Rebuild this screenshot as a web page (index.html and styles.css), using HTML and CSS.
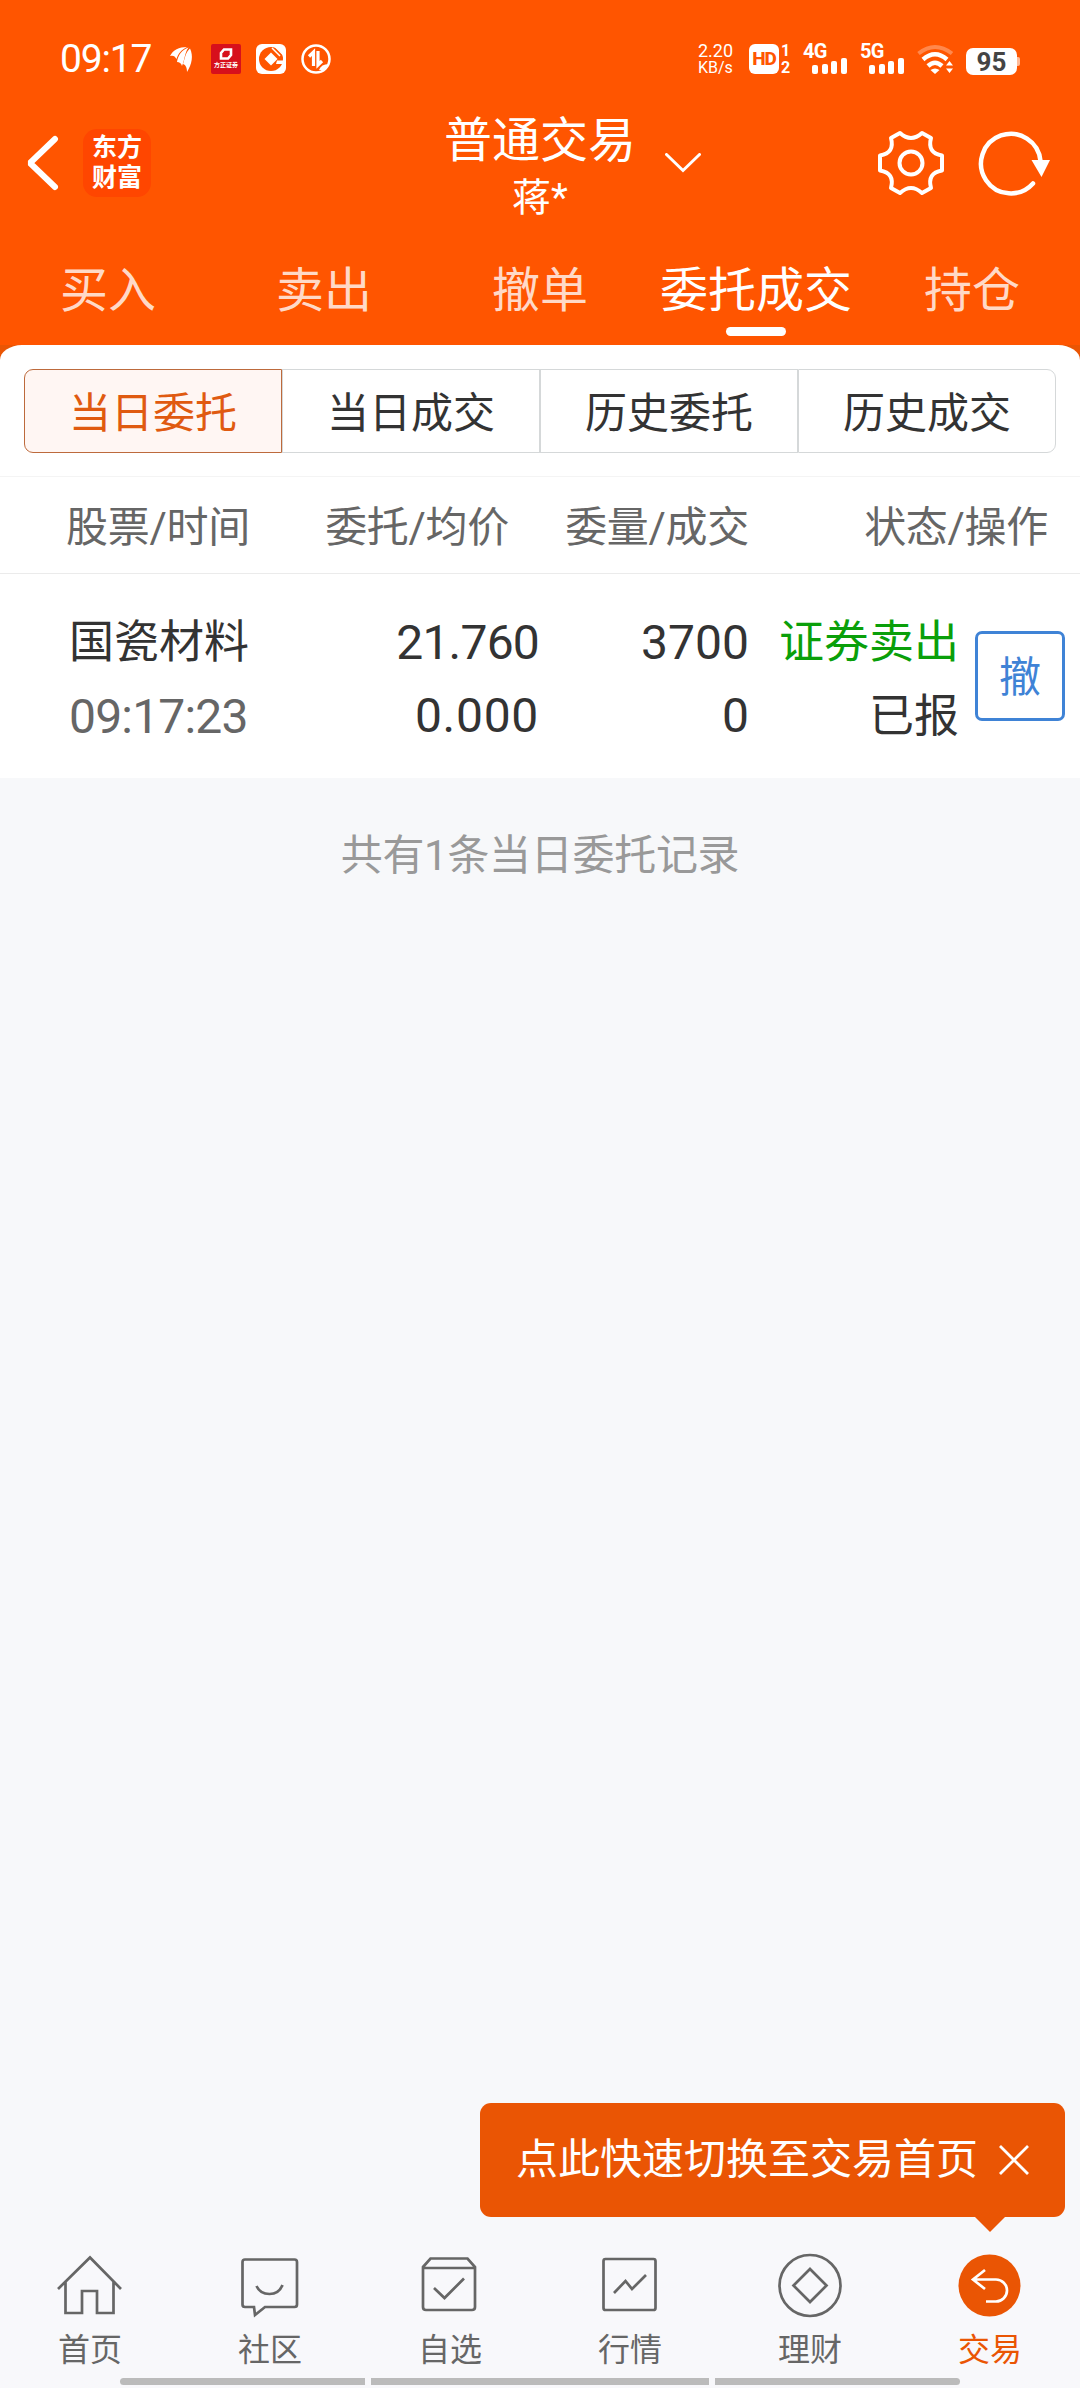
FILE: index.html
```html
<!DOCTYPE html>
<html lang="zh-CN">

<head>
    <meta charset="UTF-8">
    <meta name="viewport" content="width=device-width, initial-scale=1.0">
    <title>普通交易 - 委托成交</title>
    <link rel="stylesheet" href="styles.css">
</head>

<body>
    <div class="page">
        <div class="statusbar">
            <span class="clock">09:17</span>
            <div class="notices">
                <svg width="30" height="30" viewBox="0 0 30 30" fill="#fff">
                    <path d="M4 12C7 6 13 3 21 3C15 6 12 10 10.500 15C9 12 7 11 4 12Z" />
                    <path d="M11 18C12 11 16 6 22.500 3.500C18.500 9 19 15 16 22C15 19 13.500 18 11 18Z" />
                    <path d="M17 20C19 15 19 9 24 4.500C27.500 12 26 20 21 28C21 24 20 21 17 20Z" />
                </svg>
                <div class="broker">
                    <svg width="14" height="12" viewBox="0 0 14 12">
                        <path d="M5 1.5H12V7L9 10.5H2V5Z" fill="none" stroke="#fff" stroke-width="2.6" />
                    </svg>
                    <span>方正证券</span>
                </div>
                <svg width="30" height="30" viewBox="0 0 30 30">
                    <rect width="30" height="30" rx="6" fill="#fff" />
                    <circle cx="15" cy="15" r="12" fill="#ff5500" />
                    <path d="M15 8.500L21.500 15L15 21.500L8.500 15Z" fill="#fff" />
                    <path d="M21 16.500H30V20H20Z" fill="#fff" />
                    <path d="M16 4L24 12M19.500 3L27 10.500" stroke="#fff" stroke-width="1.500" />
                </svg>
                <svg width="30" height="30" viewBox="0 0 30 30" fill="none" stroke="#fff">
                    <circle cx="15" cy="15" r="13.5" stroke-width="2.5" />
                    <path d="M12.5 22V8L8 12.5M17 7V21L21 17" stroke-width="3.2" />
                    <path d="M18 26Q20 20 28 20L24 26Z" fill="#fff" stroke="none" />
                </svg>
            </div>
            <div class="signals">
                <div class="speed"><span>2.20</span><span>KB/s</span></div>
                <div class="hd">HD</div>
                <div class="sim">1<br>2</div>
                <div class="cell">
                    <b>4G</b>
                    <svg width="45" height="30" viewBox="0 0 45 30" fill="#fff">
                        <rect x="9" y="21" width="6" height="9" rx="2" />
                        <rect x="19" y="20" width="6" height="10" rx="2" />
                        <rect x="28" y="17" width="6" height="13" rx="2" />
                        <rect x="38" y="14" width="6" height="16" rx="2" />
                    </svg>
                </div>
                <div class="cell cell-5g">
                    <b>5G</b>
                    <svg width="45" height="30" viewBox="0 0 45 30" fill="#fff">
                        <rect x="9" y="21" width="6" height="9" rx="2" />
                        <rect x="19" y="20" width="6" height="10" rx="2" />
                        <rect x="28" y="17" width="6" height="13" rx="2" />
                        <rect x="38" y="14" width="6" height="16" rx="2" />
                    </svg>
                </div>
                <svg class="wifi" width="38" height="30" viewBox="0 0 38 30" fill="none" stroke="#fff" stroke-width="4">
                    <path d="M1.5 9.500Q18 -3.500 35 9.500" stroke-opacity=".3" />
                    <path d="M6 15.500Q18 5 30 15.500" stroke-width="4.500" />
                    <path d="M11 22Q18 15.500 25 22" stroke-width="4.500" />
                    <path d="M13.500 26Q18 23 22.500 26L18 30Z" fill="#fff" stroke="none" />
                    <path d="M29 21.500L32.500 17L36 21.500ZM29 24.500L32.500 29L36 24.500Z" fill="#fff" stroke="none" />
                </svg>
                <div class="battery">95</div>
            </div>
        </div>

        <header>
            <div class="header-left">
                <svg class="back" width="36" height="56" viewBox="0 0 36 56">
                    <path d="M31 4L6 28L31 52" fill="none" stroke="#fff" stroke-width="6" stroke-linecap="round" stroke-linejoin="bevel" />
                </svg>
                <div class="logo">东方<br>财富</div>
            </div>
            <div class="title">
                <h1>普通交易</h1>
                <p>蒋*</p>
            </div>
            <div class="header-right">
                <svg class="arrow" width="36" height="20" viewBox="0 0 36 20">
                    <path d="M1.500 1.500L18 17.500L34.500 1.500" fill="none" stroke="#fff" stroke-width="3" stroke-linecap="round" />
                </svg>
                <svg class="gear" width="68" height="68" viewBox="-34 -34 68 68" fill="none" stroke="#fff" stroke-width="4" stroke-linejoin="round">
                    <path d="M-11 -30Q0 -20 11 -30L20 -25Q16 -10 31 -7.500V7.500Q16 10 20 25L11 30Q0 20 -11 30L-20 25Q-16 10 -31 7.500V-7.500Q-16 -10 -20 -25Z" />
                    <circle r="11.500" />
                </svg>
                <svg class="refresh" width="74" height="68" viewBox="-34 -34 74 68">
                    <path d="M29.500 -2A29.800 29.800 0 1 0 22 20.500" fill="none" stroke="#fff" stroke-width="4.500" stroke-linecap="round" />
                    <path d="M20.500 -3H39L30.500 14Z" fill="#fff" />
                </svg>
            </div>
        </header>

        <nav class="tabs">
            <a>买入</a>
            <a>卖出</a>
            <a>撤单</a>
            <a class="active">委托成交</a>
            <a>持仓</a>
        </nav>

        <div class="corner"></div>
        <main>
            <div class="segment">
                <a class="active">当日委托</a>
                <a>当日成交</a>
                <a>历史委托</a>
                <a>历史成交</a>
            </div>
            <div class="list-head">
                <span>股票/时间</span>
                <span>委托/均价</span>
                <span>委量/成交</span>
                <span>状态/操作</span>
            </div>
            <div class="order">
                <div>国瓷材料<br><span class="time">09:17:23</span></div>
                <div class="num"><span class="price">21.760</span><br><span class="avg">0.000</span></div>
                <div class="num">3700<br>0</div>
                <div class="state"><span class="sell">证券卖出</span><br>已报</div>
                <a class="cancel">撤</a>
            </div>
        </main>
        <p class="total">共有1条当日委托记录</p>

        <div class="tip">
            <span>点此快速切换至交易首页</span>
            <svg width="32" height="32" viewBox="0 0 32 32">
                <path d="M2 2L30 30M30 2L2 30" stroke="#fff" stroke-width="2.800" />
            </svg>
        </div>

        <footer>
            <div class="menu">
                <a>
                    <svg viewBox="0 0 72 72">
                        <path d="M4 39L36 7.500L67 39M11.500 32V63H28V41H43V63H59.500V32" />
                    </svg>
                    首页
                </a>
                <a>
                    <svg viewBox="0 0 72 72">
                        <path d="M11 9.500H60.500Q63 9.500 63 12V54.500Q63 57 60.500 57H31L21 65L20 57H11Q8.500 57 8.500 54.500V12Q8.500 9.500 11 9.500Z" />
                        <path d="M22.500 36Q26 44 35.500 44T48.500 35" />
                    </svg>
                    社区
                </a>
                <a>
                    <svg viewBox="0 0 72 72">
                        <path d="M9 17L16.500 8.500H53.500L61 17V57Q61 60 58 60H12Q9 60 9 57ZM9 18H61M20 38L30.500 48L50 28.500" />
                    </svg>
                    自选
                </a>
                <a>
                    <svg viewBox="0 0 72 72">
                        <rect x="9.500" y="9" width="52" height="51" rx="2" />
                        <path d="M20 43L31.500 31L38 39L52 25" />
                    </svg>
                    行情
                </a>
                <a>
                    <svg viewBox="0 0 72 72">
                        <circle cx="36" cy="35.500" r="30.500" />
                        <path d="M36 19L52.500 35.500L36 52L19.500 35.500Z" />
                    </svg>
                    理财
                </a>
                <a class="active">
                    <svg viewBox="0 0 72 72">
                        <circle cx="35.500" cy="35.500" r="31" fill="#ea5504" stroke="none" />
                        <path d="M31 20L19 29.500L31 39M19 29.500H42A11 11 0 0 1 42 51.500H32" stroke="#fff" />
                    </svg>
                    交易
                </a>
            </div>
            <div class="bars"><i></i><i></i><i></i></div>
        </footer>
    </div>
</body>

</html>
```
FILE: styles.css
```css
* {
    box-sizing: border-box;
}

body {
    margin: 0;
    font-family: Roboto, "Noto Sans CJK SC", sans-serif;
    color: #333;
}

h1, p {
    margin: 0;
    font-weight: 400;
}

svg {
    display: block;
    flex-shrink: 0;
}

.page {
    position: relative;
    display: flex;
    flex-direction: column;
    width: 1080px;
    height: 2388px;
    background-color: #f7f8fa;
    overflow: hidden;
}

/* status bar */
.statusbar {
    display: flex;
    align-items: center;
    height: 112px;
    padding: 6px 60px 0;
    background-color: #ff5500;
    color: #fff;
}

.clock {
    width: 106px;
    font-size: 39px;
    letter-spacing: -1.2px;
}

.notices {
    display: flex;
    gap: 15px;
}

.broker {
    display: flex;
    flex-direction: column;
    align-items: center;
    width: 30px;
    height: 30px;
    padding-top: 4px;
    border-radius: 2px;
    background-color: #d7101c;
}

.broker span {
    font-size: 6px;
    line-height: 10px;
    font-weight: 700;
    white-space: nowrap;
}

.signals {
    display: flex;
    align-items: center;
    height: 30px;
    margin-left: auto;
}

.speed {
    display: flex;
    flex-direction: column;
    width: 51px;
    font-size: 18px;
    line-height: 17px;
}

.speed span:last-child {
    font-size: 16px;
}

.hd {
    width: 30px;
    height: 30px;
    border-radius: 6px;
    background-color: #fff;
    color: #ff5500;
    font-size: 19px;
    font-weight: 800;
    line-height: 30px;
    text-align: center;
    letter-spacing: -1px;
}

.sim {
    width: 24px;
    padding-left: 2px;
    font-size: 16px;
    font-weight: 700;
    line-height: 17px;
}

.cell {
    position: relative;
    width: 45px;
    height: 30px;
}

.cell-5g {
    margin-left: 12px;
}

.cell b {
    position: absolute;
    left: 0;
    top: -2px;
    font-size: 20px;
    line-height: 18px;
    letter-spacing: -0.8px;
}

.wifi {
    margin-left: 12px;
}

.battery {
    position: relative;
    width: 51px;
    height: 27px;
    margin: 4px 3px 0 11px;
    border-radius: 7px;
    background-color: #fff;
    color: #444;
    font-size: 26px;
    font-weight: 700;
    line-height: 28px;
    text-align: center;
}

.battery::after {
    content: "";
    position: absolute;
    right: -3px;
    top: 9px;
    width: 3px;
    height: 9px;
    border-radius: 0 2px 2px 0;
    background-color: #ffbb99;
}

/* header */
header {
    display: grid;
    grid-template-columns: 1fr auto 1fr;
    height: 115px;
    background-color: #ff5500;
    color: #fff;
}

.header-left, .header-right {
    display: flex;
    align-items: center;
    padding-bottom: 13px;
}

.back {
    margin: 0 23px 0 24px;
}

.logo {
    width: 68px;
    height: 68px;
    padding-top: 4px;
    border-radius: 14px;
    background-color: #ff4600;
    font-size: 25px;
    font-weight: 700;
    line-height: 30px;
    text-align: center;
}

.title {
    text-align: center;
}

.title h1 {
    font-size: 48px;
    line-height: 58px;
}

.title p {
    font-size: 39px;
    line-height: 57px;
}

.arrow {
    margin-left: 29px;
}

.gear {
    margin-left: auto;
}

.refresh {
    margin: 0 29px 0 32px;
}

.tabs {
    display: flex;
    height: 118px;
    background-color: #ff5500;
}

.tabs a {
    display: flex;
    flex-direction: column;
    align-items: center;
    width: 216px;
    padding-top: 36px;
    font-size: 48px;
    line-height: 56px;
    color: #ffd9c7;
}

.tabs .active {
    color: #fff;
}

.tabs .active::after {
    content: "";
    width: 60px;
    height: 9px;
    margin-top: 8px;
    border-radius: 5px;
    background-color: #fff;
}

/* rounded top edge of the white panel */
.corner {
    height: 15px;
    background-color: #ea5504;
}

.corner::before {
    content: "";
    display: block;
    height: 15px;
    border-radius: 22px 22px 0 0 / 15px 15px 0 0;
    background-color: #fff;
}

main {
    background-color: #fff;
}

.segment {
    display: flex;
    padding: 9px 24px 23px;
}

.segment a {
    flex: 1;
    height: 84px;
    border: 1px solid #d5d8d9;
    font-size: 42px;
    line-height: 87px;
    text-align: center;
}

.segment a:first-child {
    border-radius: 9px 0 0 9px;
}

.segment a:last-child {
    border-radius: 0 9px 9px 0;
}

.segment .active {
    border-color: #bd6a3c;
    background-color: #fff6f3;
    color: #e05a10;
}

.list-head {
    display: grid;
    grid-template-columns: 270px 239px 240px 299px;
    height: 98px;
    padding-top: 6px;
    border-top: 1px solid #f4f4f4;
    border-bottom: 1px solid #ebebeb;
    font-size: 42px;
    letter-spacing: -0.3px;
    line-height: 90px;
    color: #666;
    text-align: right;
}

.list-head span:first-child {
    padding-left: 66px;
    text-align: left;
}

.order {
    display: grid;
    grid-template-columns: 270px 269px 210px 210px 90px;
    height: 204px;
    padding-top: 32px;
    font-size: 45px;
    line-height: 74px;
}

.order div:first-child {
    padding-left: 69px;
}

.order .time {
    font-size: 48px;
    letter-spacing: -0.8px;
    color: #666;
}

.order .num {
    font-size: 48px;
    line-height: 73px;
    text-align: right;
}

.order .price {
    letter-spacing: -0.8px;
}

.order .avg {
    letter-spacing: 0.7px;
}

.order .state {
    text-align: right;
}

.order .sell {
    color: #0a9f0a;
}

.order .cancel {
    width: 90px;
    height: 90px;
    margin: 25px 0 0 16px;
    border: 3px solid #3f83d6;
    border-radius: 7px;
    font-size: 42px;
    line-height: 88px;
    text-align: center;
    color: #3f83d6;
}

.total {
    margin-top: 48px;
    font-size: 42px;
    letter-spacing: -0.3px;
    line-height: 60px;
    text-align: center;
    color: #999;
}

.tip {
    position: absolute;
    left: 480px;
    bottom: 171px;
    display: flex;
    align-items: center;
    justify-content: space-between;
    width: 585px;
    height: 114px;
    padding: 0 35px 0 36px;
    border-radius: 11px;
    background-color: #ea5504;
    font-size: 42px;
    line-height: 60px;
    color: #fff;
}

.tip::after {
    content: "";
    position: absolute;
    right: 60px;
    top: 100%;
    border: 15px solid transparent;
    border-top-color: #ea5504;
    border-bottom: none;
}

/* bottom menu */
footer {
    margin-top: auto;
    padding-bottom: 3px;
    background-color: #f8f8fb;
}

.menu {
    display: flex;
}

.menu a {
    display: flex;
    flex-direction: column;
    align-items: center;
    width: 180px;
    height: 128px;
    gap: 8px;
    font-size: 32px;
    line-height: 40px;
    color: #666;
}

.menu svg {
    width: 72px;
    height: 72px;
    fill: none;
    stroke: #666;
    stroke-width: 2.7;
}

.menu .active {
    color: #ea5504;
}

.bars {
    display: flex;
    gap: 6px;
    padding: 0 120px;
}

.bars i {
    width: 245px;
    height: 7px;
    background-color: #bbb;
}

.bars i:nth-child(2) {
    width: 338px;
}

.bars i:first-child {
    border-radius: 4px 0 0 4px;
}

.bars i:last-child {
    border-radius: 0 4px 4px 0;
}
```
